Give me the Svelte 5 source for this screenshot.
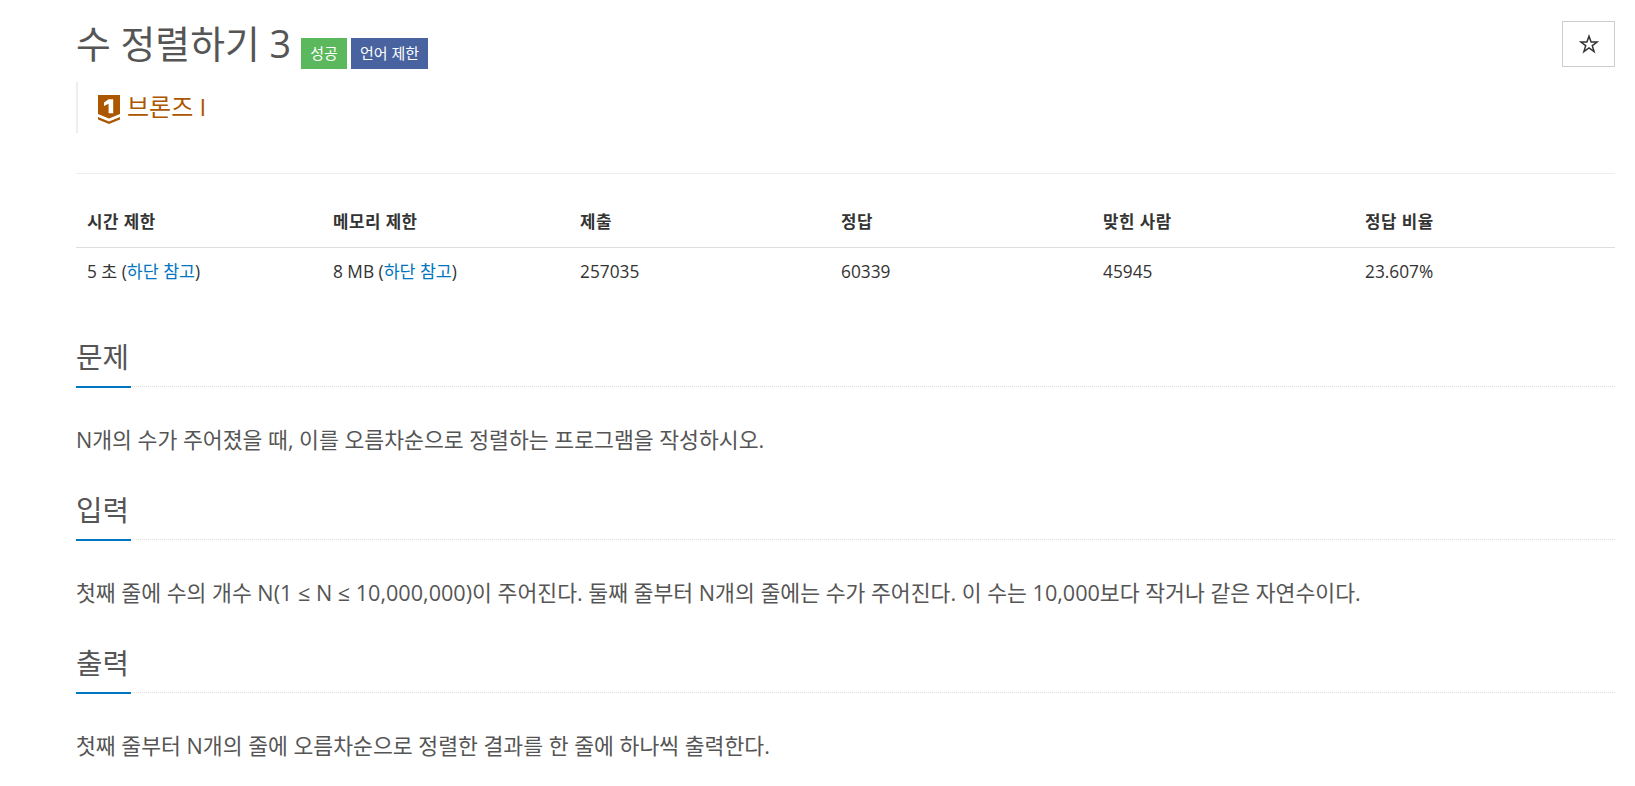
<script>
  const heads = ['시간 제한', '메모리 제한', '제출', '정답', '맞힌 사람', '정답 비율'];
  const sections = [
    { title: '문제', text: 'N개의 수가 주어졌을 때, 이를 오름차순으로 정렬하는 프로그램을 작성하시오.' },
    { title: '입력', text: '첫째 줄에 수의 개수 N(1 ≤ N ≤ 10,000,000)이 주어진다. 둘째 줄부터 N개의 줄에는 수가 주어진다. 이 수는 10,000보다 작거나 같은 자연수이다.' },
    { title: '출력', text: '첫째 줄부터 N개의 줄에 오름차순으로 정렬한 결과를 한 줄에 하나씩 출력한다.' }
  ];
</script>

<main class="page">
  <header class="head">
    <div class="title-row">
      <h1>수 정렬하기 3</h1>
      <span class="label green">성공</span>
      <span class="label blue">언어 제한</span>
      <button class="star" aria-label="즐겨찾기">
        <svg viewBox="0 0 20 20" width="20" height="20" aria-hidden="true">
          <path d="M10 2.2L12.1 8H18.2L13.3 11.6L15.1 17.6L10 14L4.9 17.6L6.7 11.6L1.8 8H7.9Z" fill="none" stroke="#333" stroke-width="1.5" />
        </svg>
      </button>
    </div>
    <blockquote class="tier">
      <svg class="tier-icon" viewBox="0 0 22 29" width="22" height="29" aria-hidden="true">
        <path d="M0 0H22V19L11 23.5L0 19Z" fill="#ad5600" />
        <path d="M0 22L11 26.5L22 22V24.5L11 29L0 24.5Z" fill="#ad5600" />
        <path d="M6 7.5L10.6 4.3H15.2V18.3H10.6V8.8L6 11Z" fill="#fff" />
      </svg>
      <span class="tier-name">브론즈 I</span>
    </blockquote>
  </header>

  <table class="info">
    <thead>
      <tr>{#each heads as h}<th>{h}</th>{/each}</tr>
    </thead>
    <tbody>
      <tr>
        <td>5 초 (<a href="#a">하단 참고</a>)</td>
        <td>8 MB (<a href="#a">하단 참고</a>)</td>
        <td>257035</td>
        <td>60339</td>
        <td>45945</td>
        <td>23.607%</td>
      </tr>
    </tbody>
  </table>

  {#each sections as s}
    <section class="sec">
      <div class="sec-head"><h2>{s.title}</h2></div>
      <p>{s.text}</p>
    </section>
  {/each}
</main>

<style>
  :global(body) {
    margin: 0;
    background: #fff;
    font-family: "Open Sans", "Noto Sans CJK KR", sans-serif;
    color: #333;
    overflow: hidden;
  }
  .page {
    width: 1539px;
    margin-left: 76px;
  }
  .head {
    height: 173px;
    border-bottom: 1px solid #eee;
  }
  .title-row {
    display: flex;
    align-items: flex-start;
    height: 82px;
  }
  h1 {
    margin: 19px 0 0;
    font-size: 37.8px;
    line-height: 50px;
    font-weight: 400;
    color: #555;
    white-space: nowrap;
  }
  .label {
    margin-top: 38px;
    height: 31px;
    line-height: 30px;
    color: #fff;
    font-size: 15px;
    text-align: center;
    white-space: nowrap;
  }
  .green { background: #5cb85c; width: 46px; margin-left: 10px; margin-right: 4px; }
  .blue { background: #4863a0; width: 77px; }
  .star {
    margin: 21px 0 0 auto;
    width: 53px;
    height: 46px;
    border: 1px solid #ccc;
    background: #fff;
    padding: 0;
    display: flex;
    align-items: center;
    justify-content: center;
  }
  .tier {
    margin: 0;
    height: 51px;
    border-left: 2px solid #eee;
    padding-left: 20px;
    display: flex;
    align-items: flex-start;
    gap: 7px;
  }
  .tier-icon { margin-top: 13px; }
  .tier-name {
    margin-top: 8px;
    font-size: 24px;
    line-height: 34px;
    color: #ad5600;
  }
  .info {
    width: 100%;
    border-collapse: collapse;
    table-layout: fixed;
    margin: 20px 0 0;
    font-size: 17.3px;
  }
  th {
    text-align: left;
    font-weight: 700;
    padding: 0 11px;
    height: 53px;
    border-bottom: 1px solid #ddd;
    color: #333;
    font-size: 16.8px;
    letter-spacing: 0.5px;
  }
  th:nth-child(1) { width: 246px; box-sizing: border-box; }
  th:nth-child(2) { width: 247px; box-sizing: border-box; }
  th:nth-child(3) { width: 261px; box-sizing: border-box; }
  th:nth-child(4), th:nth-child(5) { width: 262px; box-sizing: border-box; }
  td {
    padding: 12px 11px 19px;
    line-height: 24px;
    color: #333;
  }
  a { color: #0076c0; text-decoration: none; }
  .sec-head {
    border-bottom: 1px dotted #ddd;
    height: 49px;
    margin-top: 32px;
  }
  .sec:first-of-type .sec-head { margin-top: 34px; }
  h2 {
    display: inline-block;
    vertical-align: top;
    margin: 0;
    width: 55px;
    height: 49px;
    font-size: 28.8px;
    line-height: 40px;
    font-weight: 400;
    color: #555;
    border-bottom: 2px solid #0076c0;
    white-space: nowrap;
  }
  p {
    margin: 0;
    padding: 35px 0 0;
    font-size: 21.6px;
    line-height: 36px;
    color: #555;
    white-space: nowrap;
  }
</style>
